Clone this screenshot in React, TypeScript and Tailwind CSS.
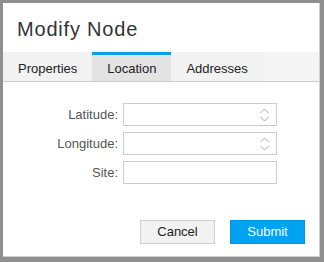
import React from 'react';

const font = { fontFamily: '"Liberation Sans", Arial, sans-serif' };

const tabs = [
  { label: 'Properties', active: false },
  { label: 'Location', active: true },
  { label: 'Addresses', active: false },
];

const fields = [
  { label: 'Latitude:', spinner: true },
  { label: 'Longitude:', spinner: true },
  { label: 'Site:', spinner: false },
];

// little up/down arrows of a number input
const Spinner = () => (
  <svg width="11" height="16" viewBox="0 0 11 16" className="absolute right-[6px] top-[3px]">
    <path d="M1.5 6 L5.5 2 L9.5 6" fill="none" stroke="#a8a8a8" strokeWidth="1" />
    <path d="M1.5 10 L5.5 14 L9.5 10" fill="none" stroke="#a8a8a8" strokeWidth="1" />
  </svg>
);

export default function App() {
  return (
    <div className="w-[324px] h-[262px] bg-[#8f8f8f] pl-[3px] pt-[3px] pr-[4px] pb-[5px]" style={font}>
      <div className="w-full h-full bg-white flex flex-col border-r border-b border-[#d0d0d0]">
        <div className="h-[49px] flex items-center pl-[14px] pt-[2px]">
          <h1 className="text-[20px] tracking-[0.8px] text-[#333]">Modify Node</h1>
        </div>

        <div className="flex h-[30px] bg-[#f5f5f5] border-b border-[#cccccc]">
          {tabs.map((tab) => (
            <div
              key={tab.label}
              className={`px-[15px] flex items-center pt-[1px] text-[13px] text-[#222] border-t-[3px] ${
                tab.active ? 'bg-[#e3e3e3] border-[#0aa0ea]' : 'bg-[#f2f2f2] border-transparent'
              }`}
            >
              {tab.label}
            </div>
          ))}
        </div>

        <div className="flex flex-col gap-[6px] mt-[21px]">
          {fields.map((f) => (
            <div key={f.label} className="flex items-center">
              <label className="w-[115px] text-right text-[13px] text-[#555]">{f.label}</label>
              <div className="relative ml-[5px] w-[154px] h-[23px] border border-[#cccccc] bg-white">
                {f.spinner && <Spinner />}
              </div>
            </div>
          ))}
        </div>

        <div className="flex justify-end gap-[15px] mt-[36px] pr-[14px]">
          <button className="w-[75px] h-[24px] bg-[#f2f2f2] border border-[#d0d0d0] text-[13px] text-[#222]">
            Cancel
          </button>
          <button className="w-[75px] h-[24px] bg-[#00a2f2] border border-[#0a94dc] text-[13px] text-white">
            Submit
          </button>
        </div>
      </div>
    </div>
  );
}
